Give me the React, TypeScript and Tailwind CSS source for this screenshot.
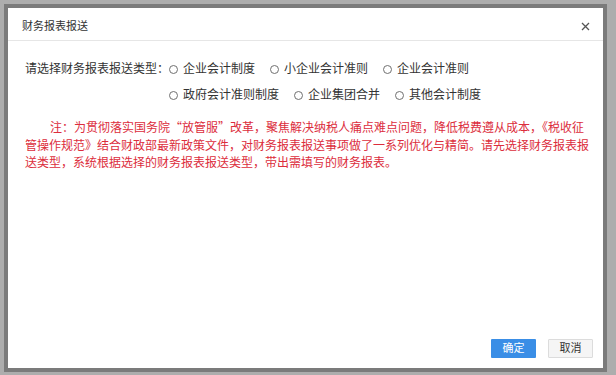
const options = [
    ['企业会计制度', '小企业会计准则', '企业会计准则'],
    ['政府会计准则制度', '企业集团合并', '其他会计制度'],
];

const noteLines = [
    '注：为贯彻落实国务院“放管服”改革，聚焦解决纳税人痛点难点问题，降低税费遵从成本，《税收征',
    '管操作规范》结合财政部最新政策文件，对财务报表报送事项做了一系列优化与精简。请先选择财务报表报',
    '送类型，系统根据选择的财务报表报送类型，带出需填写的财务报表。',
];

function Radio({ label }: { label: string }) {
    return (
        <label className="flex items-center mr-[15px] cursor-pointer">
            <span className="w-[9px] h-[9px] rounded-full border border-[#707070] bg-white mr-[5px]" />
            <span>{label}</span>
        </label>
    );
}

export default function App() {
    return (
        <div className="w-[616px] h-[375px] bg-[#adadad] p-[4px] pb-[3px] pr-[9px] font-['Liberation_Sans','Noto_Sans_CJK_SC',sans-serif]">
            <div className="w-full h-full border-4 border-[#7b7b7b] bg-white flex flex-col">
                {/* Header */}
                <div className="h-[33px] flex items-center justify-between pl-[14px] pr-[13px] pt-[5px] border-b border-[#e6e6e6]">
                    <span className="text-[11px] text-[#333]">财务报表报送</span>
                    <svg width="9" height="9" viewBox="0 0 9 9" className="text-[#555]">
                        <path d="M1 1L8 8M8 1L1 8" stroke="currentColor" strokeWidth="1.3" />
                    </svg>
                </div>

                {/* Body */}
                <div className="flex-1 flex flex-col pl-[17px] pr-[10px] pt-[18px]">
                    <div className="flex text-[12px] text-[#333] leading-[20px]">
                        <span className="shrink-0">请选择财务报表报送类型：</span>
                        <div className="flex flex-col gap-[6px]">
                            {options.map((row, i) => (
                                <div key={i} className="flex">
                                    {row.map(o => <Radio key={o} label={o} />)}
                                </div>
                            ))}
                        </div>
                    </div>

                    <div className="mt-[13px] text-[12px] leading-[17.5px] text-[#dc2d3c] font-['Noto_Sans_CJK_SC',sans-serif]">
                        {noteLines.map((line, i) => (
                            <div key={i} className={i === 0 ? 'pl-[25px] whitespace-nowrap' : 'whitespace-nowrap'}>{line}</div>
                        ))}
                    </div>

                    <div className="flex-1" />

                    <div className="flex justify-end gap-[12px] pb-[10px]">
                        <button className="w-[45px] h-[19px] bg-[#3a8ee6] text-white text-[11px] leading-none rounded-[1px]">确定</button>
                        <button className="w-[45px] h-[19px] bg-[#f5f5f5] border border-[#dcdcdc] text-[#333] text-[11px] leading-none rounded-[1px]">取消</button>
                    </div>
                </div>
            </div>
        </div>
    );
}
